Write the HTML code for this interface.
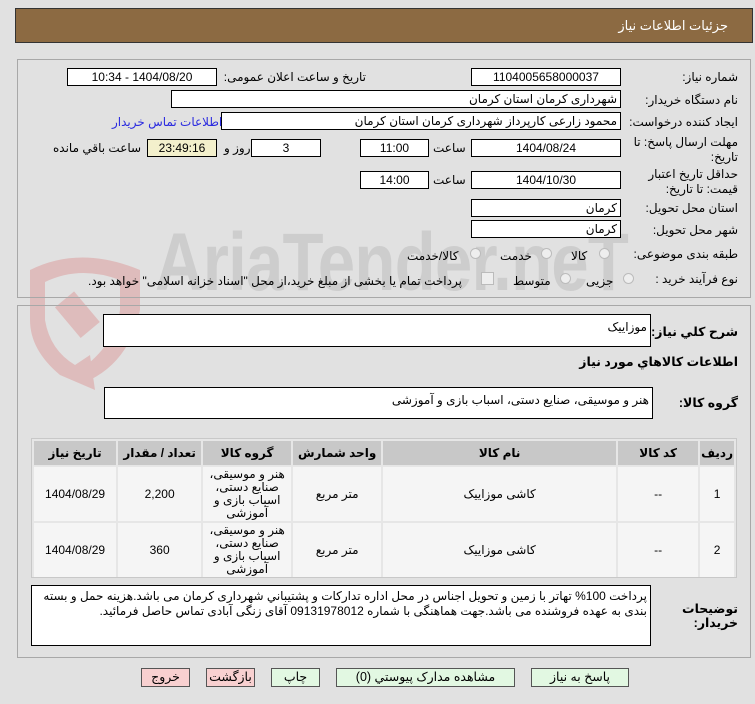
<!DOCTYPE html>
<html><head><meta charset="utf-8"><style>
body{margin:0;width:755px;height:704px;background:#e1e1e1;font-family:"Liberation Sans","DejaVu Sans",sans-serif;font-size:12px;color:#000;position:relative;overflow:hidden}
.a{position:absolute}
.box{position:absolute;background:#fff;border:1px solid #000;box-sizing:border-box;direction:rtl;padding:0 3px;line-height:16px;white-space:nowrap}
.c{text-align:center}
.l{position:absolute;direction:rtl;white-space:nowrap;text-align:right}
.panel{position:absolute;border:1px solid #a8a8a8;box-sizing:border-box}
table{border-collapse:separate;border-spacing:2px;}
td,th{text-align:center;direction:rtl}
th{background:#c8c8c8;height:22px;font-weight:bold}
td{background:#f5f5f5}
.btn{position:absolute;border:1px solid #555;box-sizing:border-box;height:19px;line-height:17px;text-align:center;direction:rtl;font-size:12.5px}
.radio{position:absolute;width:11px;height:11px;border:1px solid #bbb;border-radius:50%;background:#eee;box-sizing:border-box}
</style></head><body>
<div class="a" style="left:15px;top:8px;width:738px;height:35px;background:#8c6a42;border:1px solid #333;box-sizing:border-box"></div>
<div class="l" style="right:27px;top:18px;color:#fff;font-size:13px">جزئیات اطلاعات نیاز</div>

<svg class="a" style="left:20px;top:250px;opacity:.5" width="130" height="140" viewBox="0 0 130 140"><path d="M10 20 Q60 -5 120 20 L120 60 Q110 110 70 130 L60 120 Q95 95 100 60 L100 30 Q60 15 25 32 L25 70 Q30 100 55 115 L70 105 L75 140 L40 125 Q10 100 10 70Z" fill="#d99"/><rect x="45" y="45" width="25" height="40" fill="#d99" transform="rotate(-40 57 65)"/></svg>
<div class="a" style="left:155px;top:222px;font-size:82px;line-height:82px;font-weight:bold;color:#bbb;opacity:.5;letter-spacing:-1px;transform:scaleX(0.82);transform-origin:left top">AriaTender.neT</div>

<div class="panel" style="left:17px;top:59px;width:734px;height:239px"></div>
<div class="l" style="right:17px;top:70px">شماره نیاز:</div>
<div class="box c" style="left:471px;top:68px;width:150px;height:18px">1104005658000037</div>
<div class="l" style="right:389px;top:70px">تاریخ و ساعت اعلان عمومی:</div>
<div class="box c" style="left:67px;top:68px;width:150px;height:18px">1404/08/20 - 10:34</div>

<div class="l" style="right:17px;top:93px">نام دستگاه خریدار:</div>
<div class="box" style="left:171px;top:90px;width:450px;height:18px">شهرداری کرمان استان کرمان</div>

<div class="l" style="right:17px;top:115px">ایجاد کننده درخواست:</div>
<div class="box" style="left:221px;top:112px;width:400px;height:18px">محمود زارعی کارپرداز شهرداری کرمان استان کرمان</div>
<div class="l" style="left:112px;top:115px;color:#2a2ae0">اطلاعات تماس خریدار</div>

<div class="l" style="right:17px;top:135px;line-height:15px">مهلت ارسال پاسخ: تا<br>تاریخ:</div>
<div class="box c" style="left:471px;top:139px;width:150px;height:18px">1404/08/24</div>
<div class="l" style="left:433px;top:141px">ساعت</div>
<div class="box c" style="left:360px;top:139px;width:69px;height:18px">11:00</div>
<div class="box c" style="left:251px;top:139px;width:70px;height:18px">3</div>
<div class="l" style="left:224px;top:141px">روز و</div>
<div class="box c" style="left:147px;top:139px;width:70px;height:18px;background:#f3f0cc">23:49:16</div>
<div class="l" style="left:53px;top:141px">ساعت باقي مانده</div>

<div class="l" style="right:17px;top:167px;line-height:15px">حداقل تاریخ اعتبار<br>قیمت: تا تاریخ:</div>
<div class="box c" style="left:471px;top:171px;width:150px;height:18px">1404/10/30</div>
<div class="l" style="left:433px;top:173px">ساعت</div>
<div class="box c" style="left:360px;top:171px;width:69px;height:18px">14:00</div>

<div class="l" style="right:17px;top:201px">استان محل تحویل:</div>
<div class="box" style="left:471px;top:199px;width:150px;height:18px">کرمان</div>
<div class="l" style="right:17px;top:223px">شهر محل تحویل:</div>
<div class="box" style="left:471px;top:220px;width:150px;height:18px">کرمان</div>

<div class="l" style="right:17px;top:247px">طبقه بندی موضوعی:</div>
<div class="radio" style="left:599px;top:248px"></div><div class="l" style="left:571px;top:249px">کالا</div>
<div class="radio" style="left:541px;top:248px"></div><div class="l" style="left:500px;top:249px">خدمت</div>
<div class="radio" style="left:470px;top:248px"></div><div class="l" style="left:407px;top:249px">کالا/خدمت</div>

<div class="l" style="right:17px;top:272px">نوع فرآیند خرید :</div>
<div class="radio" style="left:623px;top:273px"></div><div class="l" style="left:586px;top:274px">جزیی</div>
<div class="radio" style="left:560px;top:273px"></div><div class="l" style="left:513px;top:274px">متوسط</div>
<div class="a" style="left:481px;top:272px;width:11px;height:11px;border:1px solid #bbb;background:#eee"></div>
<div class="l" style="left:88px;top:274px">پرداخت تمام یا بخشی از مبلغ خرید،از محل "اسناد خزانه اسلامی" خواهد بود.</div>

<div class="panel" style="left:17px;top:305px;width:734px;height:353px"></div>
<div class="l" style="right:17px;top:324px;font-weight:bold;font-size:12.5px">شرح کلي نیاز:</div>
<div class="box" style="left:103px;top:314px;width:548px;height:33px;padding-top:4px">موزاییک</div>
<div class="l" style="right:17px;top:354px;font-weight:bold;font-size:12.5px">اطلاعات کالاهاي مورد نیاز</div>
<div class="l" style="right:17px;top:395px;font-weight:bold;font-size:12.5px">گروه کالا:</div>
<div class="box" style="left:104px;top:387px;width:549px;height:32px;padding-top:4px">هنر و موسیقی، صنایع دستی، اسباب بازی و آموزشی</div>

<div class="a" style="left:31px;top:438px;width:706px;height:140px;border:1px solid #c8c8c8;box-sizing:border-box;background:#e6e6e6">
<table style="width:704px;direction:rtl;margin:0 0 0 0;font-size:12px" dir="rtl">
<tr><th style="width:26px">ردیف</th><th style="width:78px">کد کالا</th><th style="width:231px">نام کالا</th><th style="width:86px">واحد شمارش</th><th style="width:86px">گروه کالا</th><th style="width:81px">تعداد / مقدار</th><th>تاریخ نیاز</th></tr>
<tr style="height:54px"><td>1</td><td>--</td><td>کاشی موزاییک</td><td>متر مربع</td><td style="line-height:13px">هنر و موسیقی، صنایع دستی، اسباب بازی و آموزشی</td><td>2,200</td><td>1404/08/29</td></tr>
<tr style="height:54px"><td>2</td><td>--</td><td>کاشی موزاییک</td><td>متر مربع</td><td style="line-height:13px">هنر و موسیقی، صنایع دستی، اسباب بازی و آموزشی</td><td>360</td><td>1404/08/29</td></tr>
</table></div>

<div class="l" style="right:17px;top:602px;font-weight:bold;font-size:12.5px;line-height:14px">توضیحات<br>خریدار:</div>
<div class="box" style="left:31px;top:585px;width:620px;height:61px;white-space:normal;padding-top:3px;line-height:15px">پرداخت 100% تهاتر با زمین و تحویل اجناس در محل اداره تدارکات و پشتیباني شهرداری کرمان می باشد.هزینه حمل و بسته بندی به عهده فروشنده می باشد.جهت هماهنگی با شماره 09131978012 آقای زنگی آبادی تماس حاصل فرمائید.</div>

<div class="btn" style="left:141px;top:668px;width:49px;background:#f8d0d0">خروج</div>
<div class="btn" style="left:206px;top:668px;width:49px;background:#f8d0d0">بازگشت</div>
<div class="btn" style="left:271px;top:668px;width:49px;background:#e2f8e2">چاپ</div>
<div class="btn" style="left:336px;top:668px;width:179px;background:#e2f8e2">مشاهده مدارک پیوستي (0)</div>
<div class="btn" style="left:531px;top:668px;width:98px;background:#e2f8e2">پاسخ به نیاز</div>
</body></html>
